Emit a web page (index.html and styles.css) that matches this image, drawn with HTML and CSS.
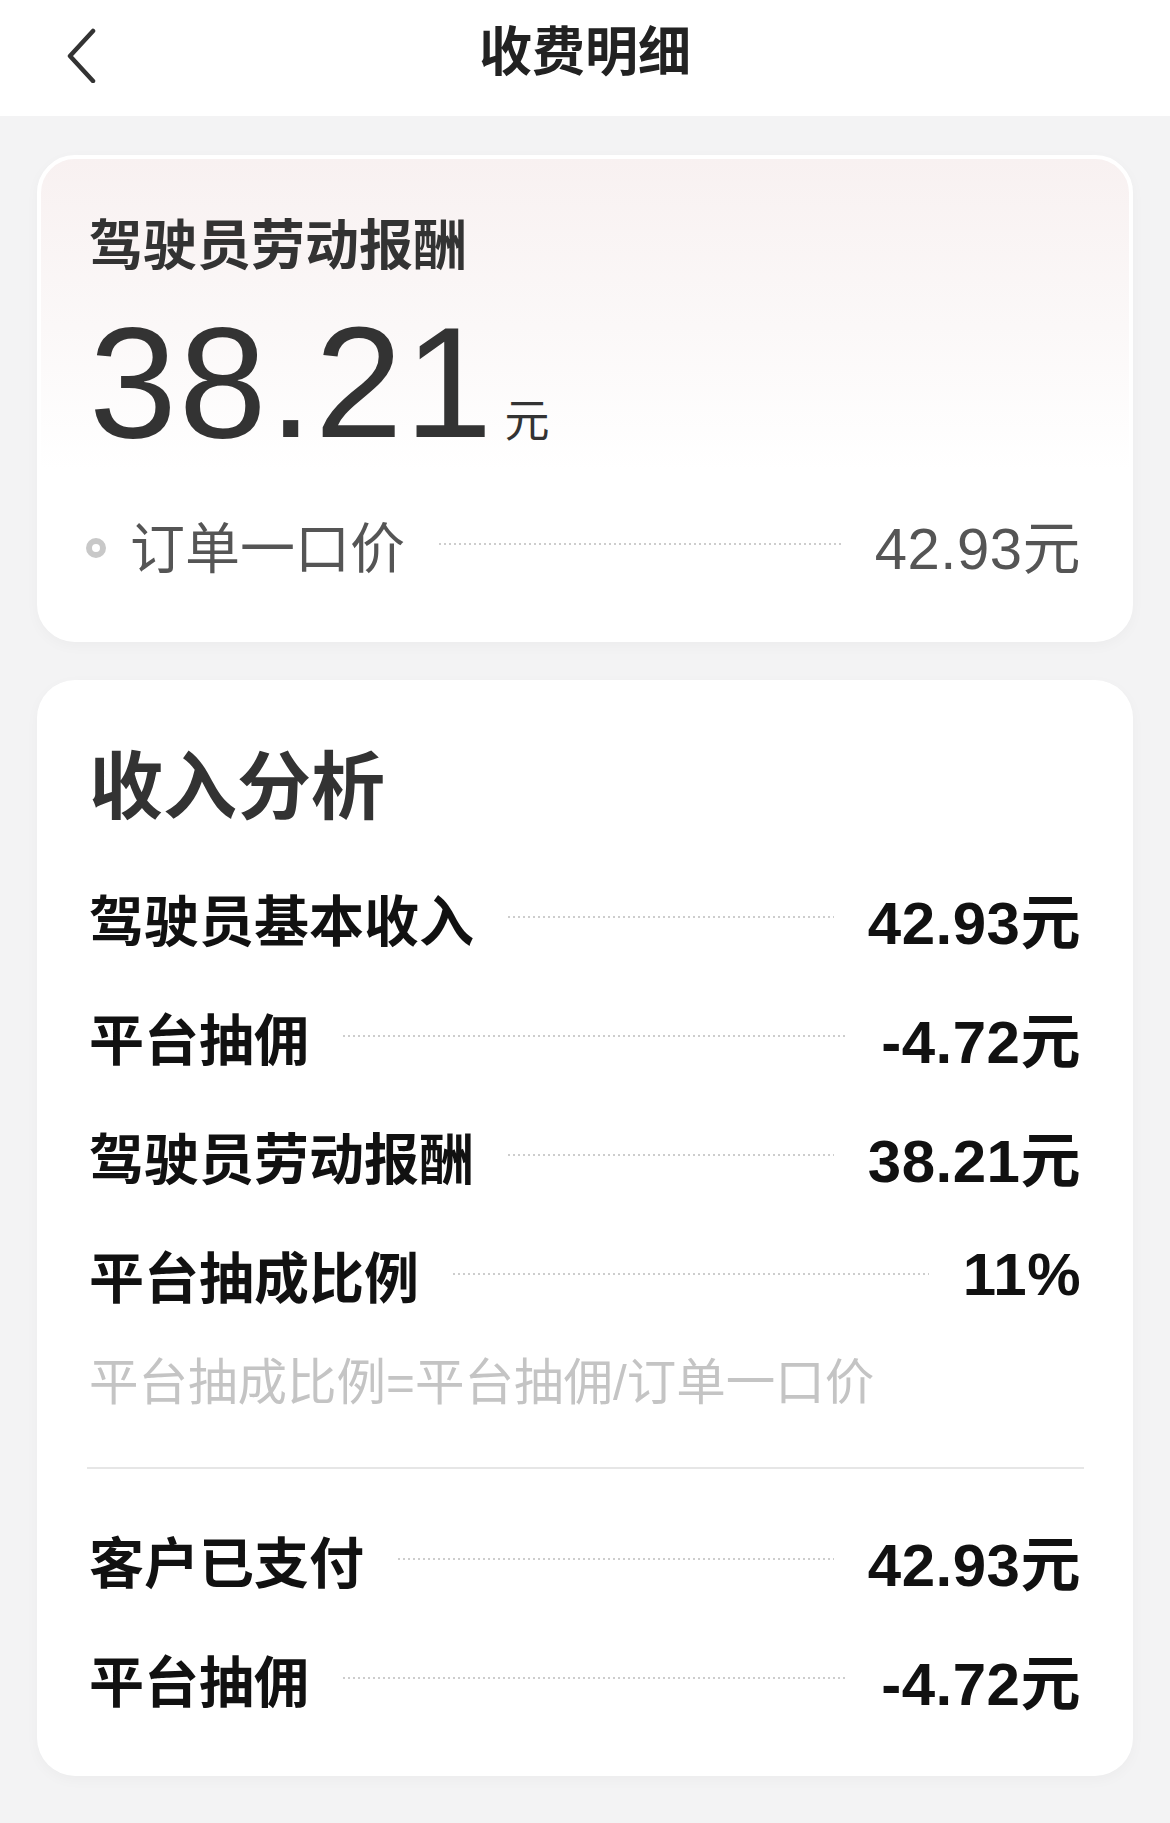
FILE: index.html
```html
<!DOCTYPE html>
<html lang="zh-CN">
<head>
	<meta charset="UTF-8">
	<meta name="viewport" content="width=device-width, initial-scale=1.0">
	<title>收费明细</title>
	<link rel="stylesheet" href="styles.css">
</head>
<body>
	<!-- 顶部导航 -->
	<div class="header">
		<div class="back">
			<svg width="40" height="60" viewBox="0 0 40 60">
				<path d="M31 8 L8 33 L31 58" fill="none" stroke="#333" stroke-width="4.5" stroke-linecap="round" stroke-linejoin="round"/>
			</svg>
		</div>
		<p class="title">收费明细</p>
		<div></div>
	</div>

	<div class="main">
		<!-- 劳动报酬 -->
		<div class="card card-top">
			<p class="card-title">驾驶员劳动报酬</p>
			<div class="amount">
				<span class="amount-num">38.21</span>
				<span class="amount-unit">元</span>
			</div>
			<div class="row row-light">
				<i class="dot"></i>
				<span class="label">订单一口价</span>
				<span class="line"></span>
				<span class="value">42.93元</span>
			</div>
		</div>

		<!-- 收入分析 -->
		<div class="card card-detail">
			<p class="section-title">收入分析</p>
			<ul class="list">
				<li class="row">
					<span class="label">驾驶员基本收入</span>
					<span class="line"></span>
					<span class="value">42.93元</span>
				</li>
				<li class="row">
					<span class="label">平台抽佣</span>
					<span class="line"></span>
					<span class="value">-4.72元</span>
				</li>
				<li class="row">
					<span class="label">驾驶员劳动报酬</span>
					<span class="line"></span>
					<span class="value">38.21元</span>
				</li>
				<li class="row">
					<span class="label">平台抽成比例</span>
					<span class="line"></span>
					<span class="value">11%</span>
				</li>
			</ul>
			<p class="formula">平台抽成比例=平台抽佣/订单一口价</p>
			<div class="divider"></div>
			<ul class="list list-pay">
				<li class="row">
					<span class="label">客户已支付</span>
					<span class="line"></span>
					<span class="value">42.93元</span>
				</li>
				<li class="row">
					<span class="label">平台抽佣</span>
					<span class="line"></span>
					<span class="value">-4.72元</span>
				</li>
			</ul>
		</div>
	</div>
</body>
</html>
```

FILE: styles.css
```css
* {
	margin: 0;
	padding: 0;
	box-sizing: border-box;
}
body {
	width: 1170px;
	min-height: 1823px;
	background-color: #f3f3f4;
	font-family: "Liberation Sans", "Noto Sans CJK SC", sans-serif;
	color: #333;
}
ul {
	list-style: none;
}

/* header */
.header {
	height: 116px;
	background-color: #fff;
	display: grid;
	grid-template-columns: 1fr auto 1fr;
	align-items: center;
}
.back {
	padding-left: 62px;
	height: 60px;
	margin-top: -10px;
}
.title {
	font-size: 53px;
	font-weight: 700;
	color: #222;
	line-height: 60px;
	margin-top: -10px;
}

.main {
	padding: 39px 37px 0;
	display: flex;
	flex-direction: column;
	gap: 38px;
}
.card {
	background-color: #fff;
	border-radius: 38px;
	padding: 0 52px;
	box-shadow: 0 4px 14px rgba(0, 0, 0, 0.03);
}

/* 第一张卡片 */
.card-top {
	height: 487px;
	padding-top: 57px;
	border: 4px solid #fff;
	padding-left: 48px;
	padding-right: 48px;
	background: linear-gradient(180deg, #f8f1f1 0%, #fbf8f8 35%, #fff 65%);
}
.card-title {
	font-size: 54px;
	font-weight: 700;
	line-height: 60px;
	color: #333;
}
.amount {
	display: flex;
	align-items: baseline;
	margin-top: 31px;
	height: 150px;
	line-height: 150px;
}
.amount-num {
	font-size: 158px;
	color: #333;
	letter-spacing: 2px;
}
.amount-unit {
	font-size: 45px;
	margin-left: 10px;
	color: #333;
}

/* 明细行 */
.row {
	display: flex;
	align-items: center;
	height: 60px;
	gap: 34px;
	font-size: 55px;
	font-weight: 700;
	color: #111;
}
.row .line {
	flex: 1;
	height: 2px;
	background-image: linear-gradient(90deg, #cdcdcd 50%, transparent 50%);
	background-size: 5px 2px;
}
.row .value {
	font-size: 60px;
	letter-spacing: 0.5px;
}
.row-light {
	margin-top: 57px;
	font-weight: 400;
	color: #555;
}
.row-light .label {
	margin-left: -10px;
}
.row-light .value {
	font-size: 58px;
}
.dot {
	width: 20px;
	height: 20px;
	border: 6px solid #c8c8c8;
	border-radius: 50%;
	margin-left: -3px;
	margin-top: 8px;
}

/* 第二张卡片 */
.card-detail {
	padding-top: 66px;
	padding-bottom: 68px;
}
.section-title {
	font-size: 74px;
	font-weight: 700;
	line-height: 84px;
	color: #333;
}
.list {
	margin-top: 57px;
	display: flex;
	flex-direction: column;
	gap: 59px;
}
.formula {
	margin-top: 49px;
	font-size: 49.5px;
	line-height: 60px;
	color: #c4c4c4;
}
.divider {
	margin: 54px -3px 0 -2px;
	height: 2px;
	background-color: #e6e6e6;
}
.list-pay {
	margin-top: 60px;
}
```
